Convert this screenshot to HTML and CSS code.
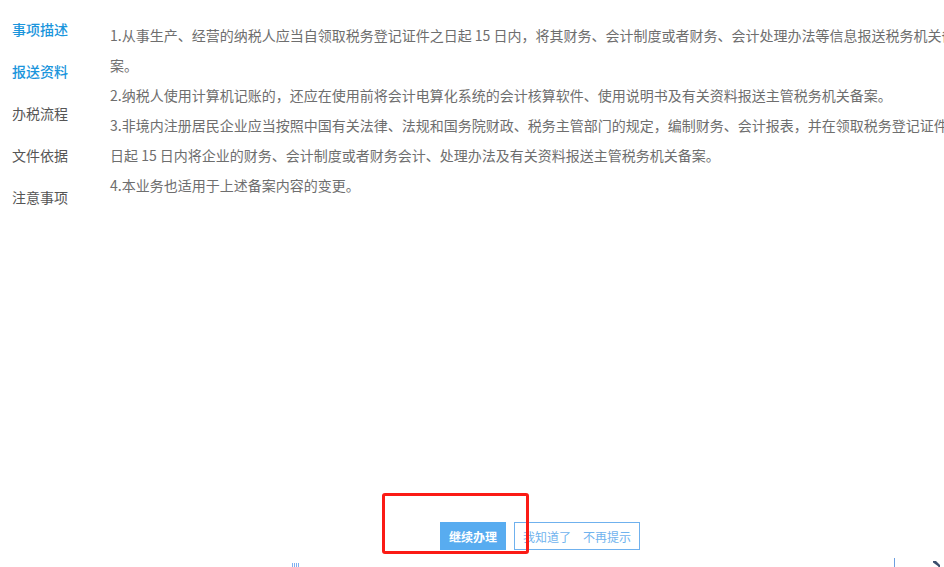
FILE: index.html
```html
<!DOCTYPE html>
<html lang="zh-CN">
<head>
<meta charset="utf-8">
<title>事项描述</title>
<link rel="stylesheet" href="styles.css">
</head>
<body>
<div class="page">
  <div class="main">
    <nav class="side-nav">
      <a class="nav-item active">事项描述</a>
      <a class="nav-item active">报送资料</a>
      <a class="nav-item">办税流程</a>
      <a class="nav-item">文件依据</a>
      <a class="nav-item">注意事项</a>
    </nav>
    <div class="content">
      <p class="para">1.从事生产、经营的纳税人应当自领取税务登记证件之日起 15 日内，将其财务、会计制度或者财务、会计处理办法等信息报送税务机关备案。</p>
      <p class="para">2.纳税人使用计算机记账的，还应在使用前将会计电算化系统的会计核算软件、使用说明书及有关资料报送主管税务机关备案。</p>
      <p class="para">3.非境内注册居民企业应当按照中国有关法律、法规和国务院财政、税务主管部门的规定，编制财务、会计报表，并在领取税务登记证件之日起 15 日内将企业的财务、会计制度或者财务会计、处理办法及有关资料报送主管税务机关备案。</p>
      <p class="para">4.本业务也适用于上述备案内容的变更。</p>
    </div>
  </div>
  <div class="actions">
    <button class="btn btn-primary">继续办理</button>
    <button class="btn btn-outline">我知道了　不再提示</button>
  </div>
  <div class="highlight-box"></div>
  <div class="grip"><i></i><i></i><i></i><i></i></div>
  <div class="scroll-tick"></div>
  <div class="resize-arrow">
    <svg width="8" height="7" viewBox="0 0 8 7"><path d="M0 0 L3 0 L7 4 L7 7 L4 7 L5.5 5.5 L0 1.5 Z" fill="#3b4f6e"/></svg>
  </div>
</div>
</body>
</html>
```

FILE: styles.css
```css
html, body {
  margin: 0;
  padding: 0;
  overflow: hidden;
  background: #ffffff;
}

body {
  font-family: "Noto Sans CJK SC", "Noto Sans", sans-serif;
  font-size: 14px;
  color: #666666;
}

.page {
  position: relative;
  width: 944px;
  height: 567px;
  display: flex;
  flex-direction: column;
  overflow: hidden;
}

.main {
  flex: 1;
  display: flex;
}

.side-nav {
  width: 110px;
  flex: none;
  padding: 8px 0 0 12px;
  box-sizing: border-box;
  display: flex;
  flex-direction: column;
}

.nav-item {
  display: block;
  height: 42px;
  line-height: 42px;
  font-size: 14px;
  color: #555555;
  white-space: nowrap;
}

.nav-item.active {
  color: #1a95dc;
  font-weight: 500;
}

.content {
  width: 854px;
  flex: none;
  padding-top: 20px;
}

.para {
  margin: 0;
  line-height: 30px;
  font-size: 14px;
  color: #6e6e6e;
}

.actions {
  display: flex;
  gap: 8px;
  padding: 0 0 17px 440px;
}

.btn {
  height: 28px;
  font-family: "Noto Sans CJK SC", "Noto Sans", sans-serif;
  font-size: 12px;
  cursor: pointer;
  margin: 0;
  box-sizing: border-box;
  border-radius: 0;
}

.btn-primary {
  background: #58acf0;
  color: #ffffff;
  border: none;
  font-weight: bold;
  padding: 0 9px;
}

.btn-outline {
  background: #ffffff;
  color: #6fb3ee;
  border: 1px solid #6fb1ee;
  padding: 0 8px;
}

.highlight-box {
  position: absolute;
  left: 382px;
  top: 493px;
  width: 147px;
  height: 61px;
  box-sizing: border-box;
  border: 3px solid #fb1b15;
  border-radius: 3px;
}

.grip {
  position: absolute;
  left: 292px;
  top: 563px;
  display: flex;
  gap: 1px;
}

.grip i {
  display: block;
  width: 1px;
  height: 4px;
  background: #7fb0f0;
}

.scroll-tick {
  position: absolute;
  left: 894px;
  top: 558px;
  width: 1px;
  height: 9px;
  background: #6c9fe0;
}

.resize-arrow {
  position: absolute;
  left: 933px;
  top: 561px;
  line-height: 0;
}
```
